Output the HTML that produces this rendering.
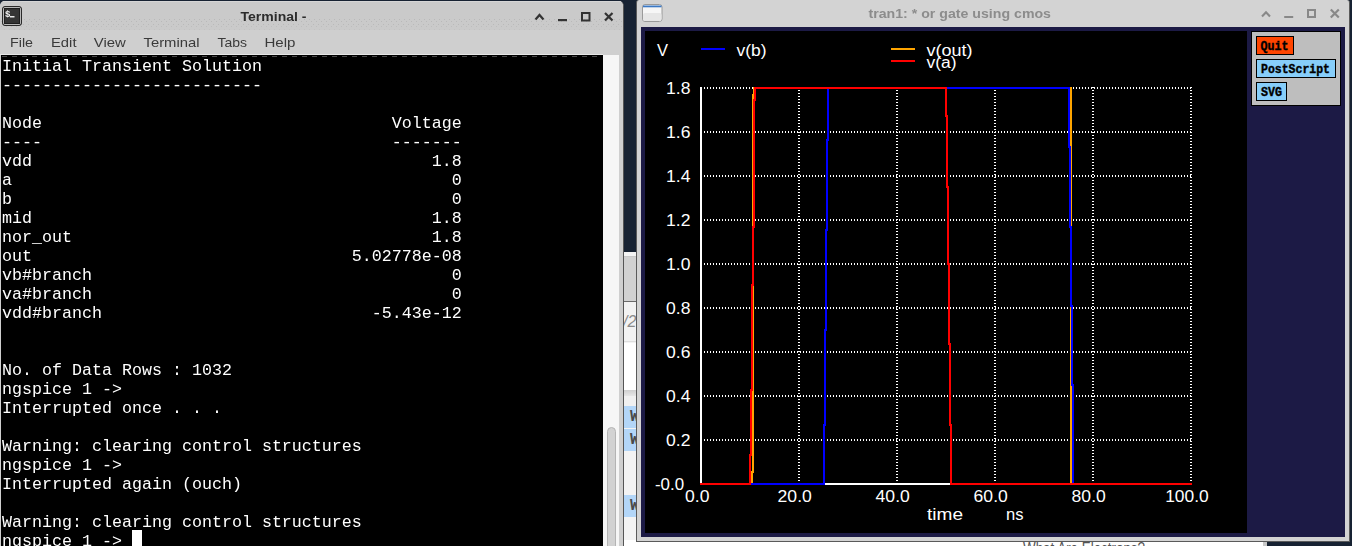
<!DOCTYPE html>
<html><head><meta charset="utf-8">
<style>
*{margin:0;padding:0;box-sizing:border-box}
html,body{-webkit-font-smoothing:antialiased;width:1352px;height:546px;overflow:hidden;background:#172232;position:relative;font-family:"Liberation Sans",sans-serif}
.a{position:absolute}
#term{left:0;top:1px;width:624px;height:545px;background:#cfcfcf;border-radius:5px 5px 0 0;overflow:hidden;border-right:1px solid #555}
#ttitle{left:0;top:0;width:623px;height:29px;background:#cacaca;border-top:1px solid #d6d6d6}
#tmenu{left:0;top:29px;width:623px;height:25px;background:#cfcfcf}
.menu{position:absolute;top:6px;font-size:13.4px;color:#3a3a3a}
#tblack{left:1px;top:54px;width:602px;height:491px;background:#000;overflow:hidden}
#ttext{will-change:transform;left:1px;top:2px;font:16.67px "Liberation Mono",monospace;color:#fff;white-space:pre;line-height:19px}
#sb{left:603px;top:54px;width:16px;height:491px;background:#f6f6f6}
#thumb{left:4px;top:372px;width:9px;height:140px;background:#d2d2d2;border:1px solid #b4b4b4;border-radius:5px}
#plot{left:636px;top:0;width:714px;height:542px;background:#d3d3d3;border:1px solid #5a5a5a;border-top:none;border-radius:3px 3px 0 0}
</style></head><body>

<!-- background window strip between windows -->
<div class="a" style="left:623px;top:252px;width:14px;height:294px;background:#f3f3f3;border-left:1px solid #6e6e6e;border-right:1px solid #6e6e6e">
  <div class="a" style="left:0;top:1px;width:12px;height:4px;background:#f4f4f4;border-bottom:1px solid #c8c8c8"></div>
  <div class="a" style="left:0;top:5px;width:12px;height:45px;background:#d1d1d1;border-bottom:1px solid #6a6a6a"></div>
  <div class="a" style="left:0;top:50px;width:12px;height:40px;background:#f2f2f2;border-bottom:1px solid #dedede;overflow:hidden"><span class="a" style="left:-1px;top:11px;font-size:16px;color:#8a8a8a;font-style:italic">/2</span></div>
  <div class="a" style="left:0;top:91px;width:12px;height:47px;background:#fff"></div>
  <div class="a" style="left:0;top:138px;width:12px;height:6px;background:linear-gradient(#cfcfcf,#e6e6e6)"></div>
  <div class="a" style="left:0;top:144px;width:12px;height:10px;background:#f0f0f0"></div>
  <div class="a" style="left:0;top:154px;width:12px;height:22px;background:#b3d6f8;overflow:hidden"><span class="a" style="left:6px;top:2px;font:bold 16px 'Liberation Mono';color:#4a4a4a">W</span></div>
  <div class="a" style="left:0;top:177px;width:12px;height:22px;background:#b3d6f8;overflow:hidden"><span class="a" style="left:6px;top:2px;font:bold 16px 'Liberation Mono';color:#4a4a4a">W</span></div>
  <div class="a" style="left:0;top:243px;width:12px;height:22px;background:#b3d6f8;overflow:hidden"><span class="a" style="left:6px;top:2px;font:bold 16px 'Liberation Mono';color:#4a4a4a">W</span></div>
</div>

<!-- bottom strip window -->
<div class="a" style="left:624px;top:540px;width:639px;height:6px;background:#fff;overflow:hidden">
  <svg class="a" style="left:0;top:0" width="639" height="6"><text x="399" y="13.8" font-family="Liberation Sans" font-size="16" fill="#555" textLength="122" lengthAdjust="spacingAndGlyphs">What Are Electrons?</text></svg>
</div>
<div class="a" style="left:1263px;top:540px;width:4px;height:6px;background:#c8c8c8"></div>

<!-- TERMINAL -->
<div id="term" class="a">
  <div id="ttitle" class="a"></div>
  <svg class="a" style="left:0;top:0" width="623" height="30"><defs><pattern id="tdots" x="0" y="0" width="5" height="30" patternUnits="userSpaceOnUse"><rect x="4" y="18" width="1" height="1" fill="#b9b9b9"/><rect x="1" y="20" width="1" height="1" fill="#b9b9b9"/><rect x="3" y="23" width="1" height="1" fill="#b9b9b9"/><rect x="1" y="25" width="1" height="1" fill="#bdbdbd"/><rect x="4" y="28" width="1" height="1" fill="#c2c2c2"/></pattern></defs><rect x="0" y="17" width="623" height="12" fill="url(#tdots)"/></svg>
  <div id="tmenu" class="a"></div>
  <svg class="a" style="left:0;top:-1px;will-change:transform" width="623" height="56" viewBox="0 0 623 56">
    <rect x="2.5" y="6.5" width="19" height="19" rx="2.5" fill="#3a3a3a" stroke="#2a2a2a"/>
    <rect x="3.5" y="7.5" width="17" height="17" rx="1.5" fill="none" stroke="#b8b8b8"/>
    <rect x="4.5" y="8.5" width="15" height="15" fill="#353535" stroke="#1e1e1e"/>
    <text x="5" y="16.5" font-family="Liberation Mono" font-weight="bold" font-size="9" fill="#f0f0f0">$</text>
    <rect x="10" y="16" width="4.5" height="1.5" fill="#e8e8e8"/>
    <text x="240.5" y="21" font-family="Liberation Sans" font-weight="bold" font-size="13.5" fill="#2c2c2c" textLength="66" lengthAdjust="spacingAndGlyphs">Terminal -</text>
    <g font-family="Liberation Sans" font-size="13.5" fill="#3a3a3a">
      <text x="10" y="47" textLength="23" lengthAdjust="spacingAndGlyphs">File</text>
      <text x="51" y="47" textLength="25.5" lengthAdjust="spacingAndGlyphs">Edit</text>
      <text x="93.8" y="47" textLength="32" lengthAdjust="spacingAndGlyphs">View</text>
      <text x="143.5" y="47" textLength="56" lengthAdjust="spacingAndGlyphs">Terminal</text>
      <text x="217.4" y="47" textLength="29.6" lengthAdjust="spacingAndGlyphs">Tabs</text>
      <text x="264.4" y="47" textLength="31" lengthAdjust="spacingAndGlyphs">Help</text>
    </g>
    <path d="M535.5 19.5 L539.5 15 L543.5 19.5" stroke="#333" stroke-width="2.2" fill="none"/>
    <rect x="558" y="19" width="9" height="2.2" fill="#333"/>
    <rect x="582" y="13" width="7.5" height="7.5" stroke="#333" stroke-width="2" fill="none"/>
    <path d="M605 13 L612.5 20.5 M612.5 13 L605 20.5" stroke="#333" stroke-width="2.2" fill="none"/>
  </svg>
  <div class="a" style="left:0;top:53px;width:603px;height:1px;background:#e8e8e8"></div>
  <div id="tblack" class="a">
    <div class="a" style="left:1px;top:1px;width:600px;height:1px;background:repeating-linear-gradient(90deg,#484848 0 5px,transparent 5px 10px)"></div>
    <div id="ttext" class="a">Initial Transient Solution
--------------------------

Node                                   Voltage
----                                   -------
vdd                                        1.8
a                                            0
b                                            0
mid                                        1.8
nor_out                                    1.8
out                                5.02778e-08
vb#branch                                    0
va#branch                                    0
vdd#branch                           -5.43e-12


No. of Data Rows : 1032
ngspice 1 -&gt;
Interrupted once . . .

Warning: clearing control structures
ngspice 1 -&gt;
Interrupted again (ouch)

Warning: clearing control structures
ngspice 1 -&gt; </div>
    <div class="a" style="left:131px;top:475px;width:10px;height:20px;background:#fff"></div>
  </div>
  <div id="sb" class="a"><div id="thumb" class="a"></div></div>
</div>

<!-- PLOT WINDOW -->
<div id="plot" class="a">
  <svg class="a" style="left:-636px;top:0" width="1352" height="30" viewBox="0 0 1352 30">
    <rect x="641.5" y="4.5" width="19.5" height="17" rx="2.5" fill="#f6f6f6" stroke="#9a9a9a"/>
    <rect x="642" y="5.5" width="18.5" height="1.8" fill="#3b78c4"/>
    <rect x="642" y="13" width="18.5" height="8" rx="2" fill="#e6e6e6"/>
    <text x="867.5" y="17.5" font-family="Liberation Sans" font-weight="bold" font-size="13.5" fill="#8c8c8c" textLength="182.5" lengthAdjust="spacingAndGlyphs">tran1: * or gate using cmos</text>
    <path d="M1261 16.5 L1265 12.3 L1269 16.5" stroke="#888" stroke-width="2.1" fill="none"/>
    <rect x="1283.2" y="16" width="9" height="2" fill="#888"/>
    <rect x="1307" y="10" width="7" height="7" stroke="#888" stroke-width="2" fill="none"/>
    <path d="M1329.8 9.5 L1337.8 17.5 M1337.8 9.5 L1329.8 17.5" stroke="#888" stroke-width="2.2" fill="none"/>
  </svg>
  <div class="a" style="left:4px;top:27px;width:704px;height:510px;background:#1c1a45"></div>
  <div class="a" style="left:8px;top:31px;width:602px;height:502px;background:#000"></div>
</div>

<!-- PLOT SVG (absolute page coords) -->
<svg class="a" style="left:0;top:0" width="1352" height="546" viewBox="0 0 1352 546">
  <defs><pattern id="hd" x="0" y="0" width="3" height="2" patternUnits="userSpaceOnUse"><rect x="2" y="0" width="1" height="2" fill="#fff"/></pattern><pattern id="vd" x="0" y="0" width="2" height="3" patternUnits="userSpaceOnUse"><rect x="0" y="0" width="2" height="1" fill="#fff"/></pattern></defs>
  <g shape-rendering="crispEdges"><rect x="702" y="87" width="490" height="2" fill="url(#hd)"/><rect x="702" y="131" width="490" height="2" fill="url(#hd)"/><rect x="702" y="175" width="490" height="2" fill="url(#hd)"/><rect x="702" y="219" width="490" height="2" fill="url(#hd)"/><rect x="702" y="263" width="490" height="2" fill="url(#hd)"/><rect x="702" y="307" width="490" height="2" fill="url(#hd)"/><rect x="702" y="351" width="490" height="2" fill="url(#hd)"/><rect x="702" y="395" width="490" height="2" fill="url(#hd)"/><rect x="702" y="439" width="490" height="2" fill="url(#hd)"/><rect x="798" y="87" width="2" height="396" fill="url(#vd)"/><rect x="896" y="87" width="2" height="396" fill="url(#vd)"/><rect x="994" y="87" width="2" height="396" fill="url(#vd)"/><rect x="1092" y="87" width="2" height="396" fill="url(#vd)"/><rect x="1190" y="87" width="2" height="396" fill="url(#vd)"/>
  <rect x="700" y="87" width="2" height="398" fill="#fff"/><rect x="700" y="483" width="491" height="2" fill="#fff"/></g>
  <g fill="none" stroke-width="2" stroke-linejoin="miter" stroke-linecap="square" shape-rendering="crispEdges">
    <path stroke="#ffa500" d="M701 484 H752 V472 H753 V95 H754 V88 H1071 V484 H1191"/>
    <path stroke="#0000ff" d="M701 484 H824 V425 H825 V330 H826 V230 H827 V140 H828 V88 H1069 V147 H1070 V227 H1071 V306 H1072 V385 H1073 V484 H1191"/>
    <path stroke="#ff0000" d="M701 484 H750 V455 H751 V390 H752 V285 H753 V227 H754 V100 H755 V88 H946 V116 H947 V187 H948 V264 H949 V344 H950 V425 H951 V484 H1191"/>
  </g>
  <g font-family="Liberation Sans" font-size="16.5" fill="#fff">
    <text x="666" y="93.5" textLength="24.4" lengthAdjust="spacingAndGlyphs">1.8</text>
    <text x="666" y="137.5" textLength="24.4" lengthAdjust="spacingAndGlyphs">1.6</text>
    <text x="666" y="181.5" textLength="24.4" lengthAdjust="spacingAndGlyphs">1.4</text>
    <text x="666" y="225.5" textLength="24.4" lengthAdjust="spacingAndGlyphs">1.2</text>
    <text x="666" y="269.5" textLength="24.4" lengthAdjust="spacingAndGlyphs">1.0</text>
    <text x="666" y="313.5" textLength="24.4" lengthAdjust="spacingAndGlyphs">0.8</text>
    <text x="666" y="357.5" textLength="24.4" lengthAdjust="spacingAndGlyphs">0.6</text>
    <text x="666" y="401.5" textLength="24.4" lengthAdjust="spacingAndGlyphs">0.4</text>
    <text x="666" y="445.5" textLength="24.4" lengthAdjust="spacingAndGlyphs">0.2</text>
    <text x="655" y="489.5" textLength="29.1" lengthAdjust="spacingAndGlyphs">-0.0</text>
    <text x="685" y="501.5" textLength="24.4" lengthAdjust="spacingAndGlyphs">0.0</text>
    <text x="777.6" y="501.5" textLength="34.2" lengthAdjust="spacingAndGlyphs">20.0</text>
    <text x="875.6" y="501.5" textLength="34.2" lengthAdjust="spacingAndGlyphs">40.0</text>
    <text x="973.6" y="501.5" textLength="34.2" lengthAdjust="spacingAndGlyphs">60.0</text>
    <text x="1071.6" y="501.5" textLength="34.2" lengthAdjust="spacingAndGlyphs">80.0</text>
    <text x="1165.2" y="501.5" textLength="43.5" lengthAdjust="spacingAndGlyphs">100.0</text>
    <text x="927" y="519.5" textLength="36" lengthAdjust="spacingAndGlyphs">time</text>
    <text x="1006" y="519.5" textLength="17.5" lengthAdjust="spacingAndGlyphs">ns</text>
  </g>
  <g font-family="Liberation Sans" font-size="16" fill="#fff">
    <text x="657" y="56" textLength="11" lengthAdjust="spacingAndGlyphs">V</text>
    <text x="736.5" y="56" textLength="30" lengthAdjust="spacingAndGlyphs">v(b)</text>
    <text x="926.5" y="55.5" textLength="46" lengthAdjust="spacingAndGlyphs">v(out)</text>
    <text x="926.5" y="67.5" textLength="30" lengthAdjust="spacingAndGlyphs">v(a)</text>
  </g>
  <rect x="701" y="48" width="24" height="2" fill="#0000ff"/>
  <rect x="891" y="48" width="24" height="2" fill="#ffa500"/>
  <rect x="891" y="60" width="24" height="2" fill="#ff0000"/>
  <!-- buttons panel -->
  <rect x="1251.5" y="31.5" width="89" height="74" fill="#bebebe" stroke="#000"/>
  <rect x="1256.5" y="36.5" width="37" height="18" fill="#ff4500" stroke="#000"/>
  <rect x="1256.5" y="59.5" width="79" height="18" fill="#87cefa" stroke="#000"/>
  <rect x="1256.5" y="82.5" width="30" height="18" fill="#87cefa" stroke="#000"/>
  <g font-family="Liberation Mono" font-weight="bold" font-size="12" fill="#000" stroke="#000" stroke-width="0.35">
    <text x="1260.5" y="50" textLength="28" lengthAdjust="spacingAndGlyphs">Quit</text>
    <text x="1261" y="73" textLength="69" lengthAdjust="spacingAndGlyphs">PostScript</text>
    <text x="1261" y="96" textLength="21" lengthAdjust="spacingAndGlyphs">SVG</text>
  </g>
</svg>
</body></html>
